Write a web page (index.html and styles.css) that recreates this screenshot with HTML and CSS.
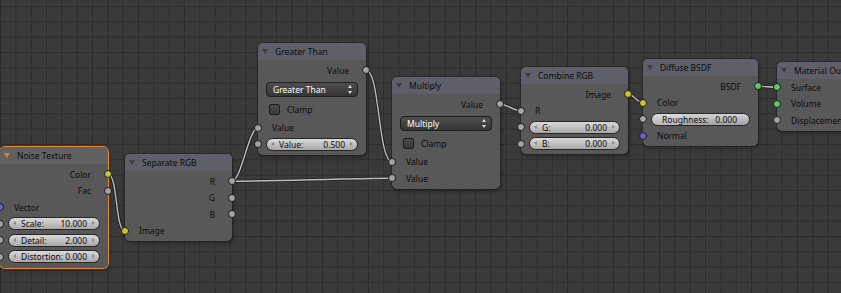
FILE: index.html
```html
<!DOCTYPE html>
<html lang="en">
<head>
  <meta charset="UTF-8" />
  <meta name="viewport" content="width=device-width, initial-scale=1.0" />
  <title>Node Editor</title>
  <link rel="stylesheet" href="styles.css">
</head>
<body>
  <div class="canvas">
    <svg class="links" width="841" height="293">
      <defs>
        <path id="l1" d="M108 174.25 C118 174.25 115 230.75 125 230.75" />
        <path id="l2" d="M232 181.25 C241 181.25 249 127.75 258 127.75" />
        <path id="l3" d="M232 181.25 C272 181.25 352 178.25 392 178.25" />
        <path id="l4" d="M366 70.25 C380 70.25 378 161.75 392 161.75" />
        <path id="l5" d="M500 104.25 C507 104.25 514 110.75 521 110.75" />
        <path id="l6" d="M628 94.25 C634 94.25 637 102.75 643 102.75" />
        <path id="l7" d="M758 86.25 C765 86.25 770 87.25 777 87.25" />
      </defs>
      <g class="wire-bg">
        <use href="#l1" /><use href="#l2" /><use href="#l3" /><use href="#l4" />
        <use href="#l5" /><use href="#l6" /><use href="#l7" />
      </g>
      <g class="wire">
        <use href="#l1" /><use href="#l2" /><use href="#l3" /><use href="#l4" />
        <use href="#l5" /><use href="#l6" /><use href="#l7" />
      </g>
    </svg>

    <!-- Noise Texture (selected) -->
    <div class="node n-noise active">
      <div class="head"><span class="tri"></span>Noise Texture</div>
      <div class="body">
        <div class="row out">Color<i class="sock yellow"></i></div>
        <div class="row out">Fac<i class="sock"></i></div>
        <div class="row in"><i class="sock blue"></i>Vector</div>
        <div class="row fld"><i class="sock"></i><div class="field"><span>Scale:</span><span>10.000</span></div></div>
        <div class="row fld"><i class="sock"></i><div class="field"><span>Detail:</span><span>2.000</span></div></div>
        <div class="row fld"><i class="sock"></i><div class="field"><span>Distortion:</span><span>0.000</span></div></div>
      </div>
    </div>

    <div class="node n-sep">
      <div class="head"><span class="tri"></span>Separate RGB</div>
      <div class="body">
        <div class="row out">R<i class="sock"></i></div>
        <div class="row out">G<i class="sock"></i></div>
        <div class="row out">B<i class="sock"></i></div>
        <div class="row in"><i class="sock yellow"></i>Image</div>
      </div>
    </div>

    <div class="node n-greater">
      <div class="head"><span class="tri"></span>Greater Than</div>
      <div class="body">
        <div class="row out">Value<i class="sock"></i></div>
        <div class="row tall first-btn"><div class="menu">Greater Than<span class="updown"></span></div></div>
        <div class="row tall"><span class="check"></span>Clamp</div>
        <div class="row in"><i class="sock"></i>Value</div>
        <div class="row fld"><i class="sock"></i><div class="field"><span>Value:</span><span>0.500</span></div></div>
      </div>
    </div>

    <div class="node n-mult">
      <div class="head"><span class="tri"></span>Multiply</div>
      <div class="body">
        <div class="row out">Value<i class="sock"></i></div>
        <div class="row tall first-btn"><div class="menu">Multiply<span class="updown"></span></div></div>
        <div class="row tall"><span class="check"></span>Clamp</div>
        <div class="row in"><i class="sock"></i>Value</div>
        <div class="row in"><i class="sock"></i>Value</div>
      </div>
    </div>

    <div class="node n-comb">
      <div class="head"><span class="tri"></span>Combine RGB</div>
      <div class="body">
        <div class="row out">Image<i class="sock yellow"></i></div>
        <div class="row in"><i class="sock"></i>R</div>
        <div class="row fld"><i class="sock"></i><div class="field"><span>G:</span><span>0.000</span></div></div>
        <div class="row fld"><i class="sock"></i><div class="field"><span>B:</span><span>0.000</span></div></div>
      </div>
    </div>

    <div class="node n-diff">
      <div class="head"><span class="tri"></span>Diffuse BSDF</div>
      <div class="body">
        <div class="row out">BSDF<i class="sock green"></i></div>
        <div class="row in"><i class="sock yellow"></i>Color</div>
        <div class="row fld"><i class="sock"></i><div class="field slider"><span>Roughness:</span><span>0.000</span></div></div>
        <div class="row in"><i class="sock blue"></i>Normal</div>
      </div>
    </div>

    <div class="node n-mat">
      <div class="head"><span class="tri"></span>Material Output</div>
      <div class="body">
        <div class="row in"><i class="sock green"></i>Surface</div>
        <div class="row in"><i class="sock green"></i>Volume</div>
        <div class="row in"><i class="sock"></i>Displacement</div>
      </div>
    </div>
  </div>
</body>
</html>
```

FILE: styles.css
```css
body {
  margin: 0;
  overflow: hidden;
  background: #393939;
}
.canvas {
  position: relative;
  width: 841px;
  height: 293px;
  overflow: hidden;
  font-family: "Noto Sans", "Open Sans", sans-serif;
  font-size: 8.5px;
  color: #0c0c0c;
  background-color: #3a3a3a;
  background-image:
    linear-gradient(to right, #2c2c2c 1px, transparent 1px),
    linear-gradient(to bottom, #2c2c2c 1px, transparent 1px);
  background-size: 15.333px 15.333px;
  background-position: 0 6px;
}
.links {
  position: absolute;
  left: 0;
  top: 0;
}
.links use {
  fill: none;
}
.wire-bg use {
  stroke: #1e1e1e;
  stroke-width: 3.2;
}
.wire use {
  stroke: #bdbdbd;
  stroke-width: 1.4;
}

/* nodes */
.node {
  position: absolute;
  background: rgba(90, 90, 90, 0.94);
  border-radius: 5px;
  box-shadow: 0 0 0 1px rgba(20, 20, 20, 0.35), 1px 2px 4px rgba(0, 0, 0, 0.35);
}
.node.active {
  box-shadow: 0 0 0 1px #e2872f, 1px 2px 4px rgba(0, 0, 0, 0.35);
}
.head {
  height: 17px;
  display: flex;
  align-items: center;
  background: #5e5f68;
  border-radius: 5px 5px 0 0;
  white-space: nowrap;
  overflow: hidden;
}
.active .head {
  background: #616161;
}
.tri {
  width: 0;
  height: 0;
  border-left: 3px solid transparent;
  border-right: 3px solid transparent;
  border-top: 5px solid #3d3d42;
  margin: 0 7px 0 4px;
}
.active .tri {
  border-top-color: #ee7a1c;
}
.body {
  padding: 2px 0 2px;
}
.n-noise { left: 0; top: 147px; width: 108px; }
.n-noise .body { padding-bottom: 3px; }
.n-sep { left: 125px; top: 154px; width: 107px; }
.n-greater { left: 258px; top: 43px; width: 108px; }
.n-mult { left: 392px; top: 77px; width: 108px; }
.n-comb { left: 521px; top: 67px; width: 107px; }
.n-diff { left: 643px; top: 59px; width: 115px; }
.n-mat { left: 777px; top: 62px; width: 100px; border-radius: 5px 0 0 5px; }
.n-mat .body { padding-top: 0; }

.row {
  position: relative;
  height: 16.5px;
  display: flex;
  align-items: center;
  white-space: nowrap;
}
.row.out {
  justify-content: flex-end;
  padding-right: 17px;
}
.row.in {
  padding-left: 14px;
}
.row.fld {
  padding: 0 8px;
}
.row.tall {
  height: 20px;
}
.row.first-btn {
  margin-top: 1px;
}

/* sockets */
.sock {
  position: absolute;
  top: 50%;
  width: 6px;
  height: 6px;
  margin-top: -4px;
  border-radius: 50%;
  border: 1px solid #1c1c1c;
  background: #a3a3a3;
}
.in .sock, .fld .sock { left: -4px; }
.out .sock { right: -4px; }
.sock.yellow { background: #c7c729; }
.sock.green { background: #63c763; }
.sock.blue { background: #6363c7; }

/* number fields */
.field {
  position: relative;
  flex: 1;
  height: 11px;
  padding: 0 12px;
  display: flex;
  justify-content: space-between;
  align-items: center;
  border: 1px solid #262626;
  border-radius: 7px;
  background: linear-gradient(#dadada, #a8a8a8);
}
.field::before, .field::after {
  content: "";
  position: absolute;
  top: 3px;
  border-top: 2.5px solid transparent;
  border-bottom: 2.5px solid transparent;
}
.field::before {
  left: 4px;
  border-right: 3px solid #8a8a8a;
}
.field::after {
  right: 4px;
  border-left: 3px solid #8a8a8a;
}
.field.slider {
  padding: 0 12px 0 10px;
  background:
    linear-gradient(to right, rgba(255, 255, 255, 0.22) 0 30px, transparent 30px),
    linear-gradient(#d2d2d2, #a2a2a2);
}
.field.slider::before, .field.slider::after {
  display: none;
}

/* dropdown menu */
.menu {
  position: relative;
  flex: 1;
  height: 13px;
  margin: 0 8px;
  padding-left: 6px;
  display: flex;
  align-items: center;
  color: #fff;
  border: 1px solid #1e1e1e;
  border-radius: 4px;
  background: linear-gradient(#4e4e4e, #353535);
}
.updown {
  position: absolute;
  right: 4px;
  top: 2px;
  width: 5px;
  height: 9px;
}
.updown::before, .updown::after {
  content: "";
  position: absolute;
  left: 0;
  border-left: 2.5px solid transparent;
  border-right: 2.5px solid transparent;
}
.updown::before {
  top: 0;
  border-bottom: 3px solid #dcdcdc;
}
.updown::after {
  bottom: 0;
  border-top: 3px solid #dcdcdc;
}

/* checkbox */
.check {
  width: 9px;
  height: 9px;
  margin: 0 7px 0 11px;
  border: 1px solid #1e1e1e;
  border-radius: 2px;
  background: linear-gradient(#4a4a4a, #383838);
}
```
